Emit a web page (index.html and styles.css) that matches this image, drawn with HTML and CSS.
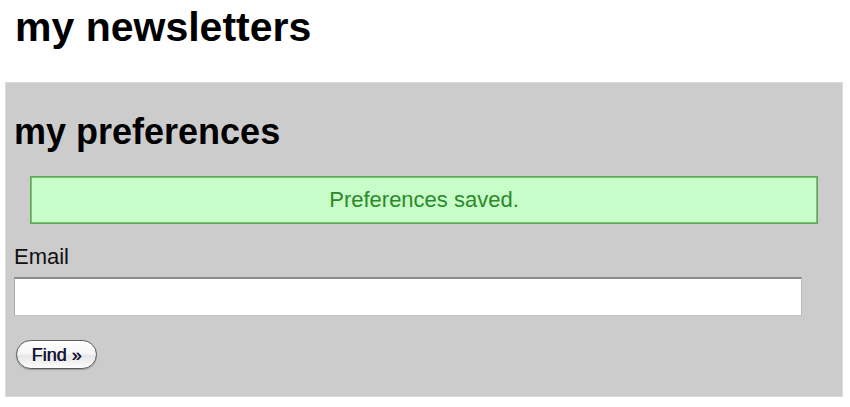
FILE: index.html
```html
<!DOCTYPE html>
<html>
<head>
  <meta charset="UTF-8">
  <title>my newsletters</title>
  <meta name="viewport" content="width=device-width, initial-scale=1.0">
  <link rel="stylesheet" href="styles.css">
</head>
<body>
  <h1>my newsletters</h1>
  <div class="box">
    <h2>my preferences</h2>
    <div class="notice">Preferences saved.</div>
    <form class="find-form" action="#">
      <label for="email">Email</label>
      <input type="text" id="email" name="email">
      <button type="submit" class="button">Find &raquo;</button>
    </form>
  </div>
</body>
</html>
```

FILE: styles.css
```css
body { margin: 0; padding: 0 7px 0 5px; font-family: "Liberation Sans", Arial, Helvetica, sans-serif; color: #000; background: #fff; }
h1 { font-size: 41px; line-height: 48px; margin: 3px 0 31px 10px; font-weight: bold; }
.box { background: #cccccc; border: 1px solid #dadada; padding: 27px 8px 27px 8px; box-sizing: border-box; width: 838px; }
.box h2 { font-size: 36px; line-height: 43px; margin: 0; font-weight: bold; }
.notice { margin: 23px 16px 0 16px; height: 48px; box-sizing: border-box; background: #c8fcc8; border: 1px solid #58a858; box-shadow: inset 0 0 0 1px #7cc07c; color: #2a8a2a; font-size: 22px; line-height: 46px; text-align: center; }
.find-form label { display: block; margin-top: 21px; font-size: 22px; line-height: 24px; color: #111; }
.find-form input { display: block; margin-top: 8px; width: 788px; height: 39px; box-sizing: border-box; background: #fff; border: 1px solid #c4c4c4; border-top: 2px solid #8c8c8c; border-left-color: #aaa; border-right-color: #bbb; padding: 2px 6px; font-size: 18px; outline: none; }
.button { display: block; margin: 24px 0 0 2px; width: 81px; height: 29px; box-sizing: border-box; border: 1px solid #5a5a5a; border-radius: 15px; background: linear-gradient(#ffffff, #f7f7f7 45%, #e6e6e6 55%, #fdfdfd); box-shadow: 0 1px 1px rgba(0,0,0,0.25); font-family: "Liberation Sans", Arial, sans-serif; font-size: 18px; color: #15153a; text-shadow: 0.4px 0 0 #15153a; padding: 0; line-height: 26px; }
```
